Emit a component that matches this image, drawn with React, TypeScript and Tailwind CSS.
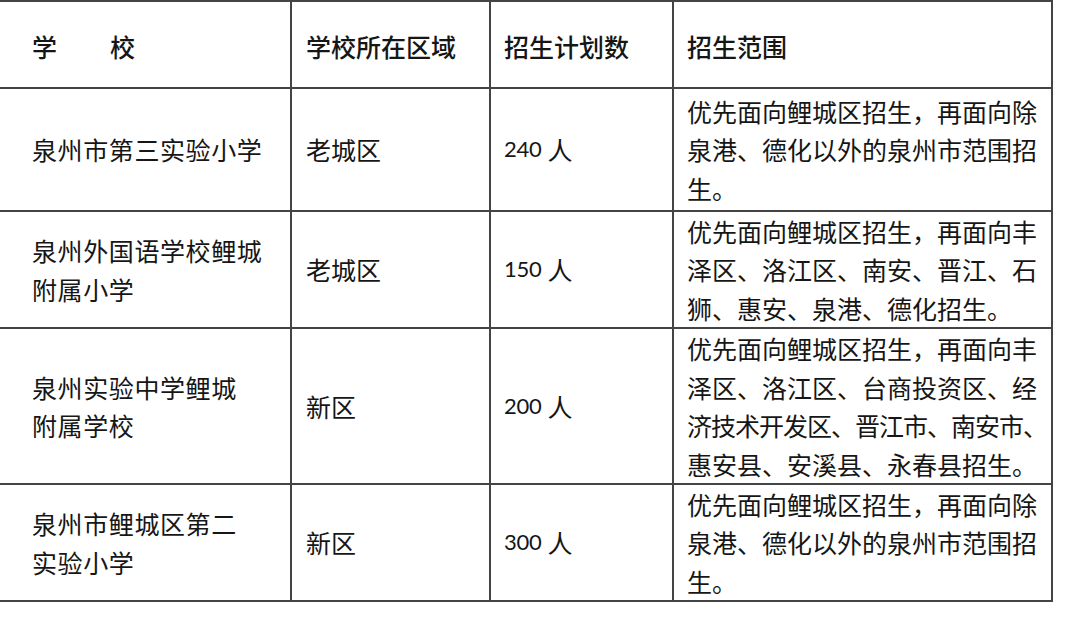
const rows = [
  {
    school: ['泉州市第三实验小学'],
    area: '老城区',
    plan: '240',
    scope: ['优先面向鲤城区招生，再面向除', '泉港、德化以外的泉州市范围招', '生。'],
    h: 'h-[123px]',
  },
  {
    school: ['泉州外国语学校鲤城', '附属小学'],
    area: '老城区',
    plan: '150',
    scope: ['优先面向鲤城区招生，再面向丰', '泽区、洛江区、南安、晋江、石', '狮、惠安、泉港、德化招生。'],
    h: 'h-[117px]',
  },
  {
    school: ['泉州实验中学鲤城', '附属学校'],
    area: '新区',
    plan: '200',
    scope: ['优先面向鲤城区招生，再面向丰', '泽区、洛江区、台商投资区、经', '济技术开发区、晋江市、南安市、', '惠安县、安溪县、永春县招生。'],
    h: 'h-[156px]',
  },
  {
    school: ['泉州市鲤城区第二', '实验小学'],
    area: '新区',
    plan: '300',
    scope: ['优先面向鲤城区招生，再面向除', '泉港、德化以外的泉州市范围招', '生。'],
    h: 'h-[117px]',
  },
]

const cell = 'flex items-center border-b-2 border-[#444]'

export default function App() {
  return (
    <div className="w-[1080px] h-[639px] bg-white text-[#161616] font-['Noto_Sans_CJK_SC',sans-serif] text-[25px] leading-[38.5px]">
      <div className="grid grid-cols-[290px_199px_183px_379px] w-[1053px] border-t-2 border-r-2 border-[#444]">
        {/* Header */}
        <div className={`${cell} h-[87px] pl-[32px] pt-1 font-medium`}>
          <span>学</span>
          <span className="ml-[53px]">校</span>
        </div>
        <div className={`${cell} h-[87px] pl-[14px] pt-1 border-l-2 font-medium`}>学校所在区域</div>
        <div className={`${cell} h-[87px] pl-[13px] pt-1 border-l-2 font-medium`}>招生计划数</div>
        <div className={`${cell} h-[87px] pl-[13px] pt-1 border-l-2 font-medium`}>招生范围</div>

        {rows.map((r, i) => (
          <div key={i} className="contents">
            <div className={`${cell} ${r.h} pl-[32px] tracking-[0.6px]`}>
              <div>
                {r.school.map((s, j) => (
                  <div key={j} className="whitespace-nowrap">{s}</div>
                ))}
              </div>
            </div>
            <div className={`${cell} ${r.h} pl-[14px] border-l-2`}>{r.area}</div>
            <div className={`${cell} ${r.h} pl-[13px] border-l-2`}>
              <span className="font-['Lato','Noto_Sans_CJK_SC',sans-serif] text-[22px] tracking-[-0.3px]">{r.plan}</span>
              <span className="ml-[6px]">人</span>
            </div>
            <div className={`${cell} ${r.h} pl-[13px] border-l-2`}>
              <div>
                {r.scope.map((s, j) => (
                  <div
                    key={j}
                    className={`whitespace-nowrap ${s.length > 14 ? 'tracking-[-1px]' : ''}`}
                  >
                    {s}
                  </div>
                ))}
              </div>
            </div>
          </div>
        ))}
      </div>
    </div>
  )
}
